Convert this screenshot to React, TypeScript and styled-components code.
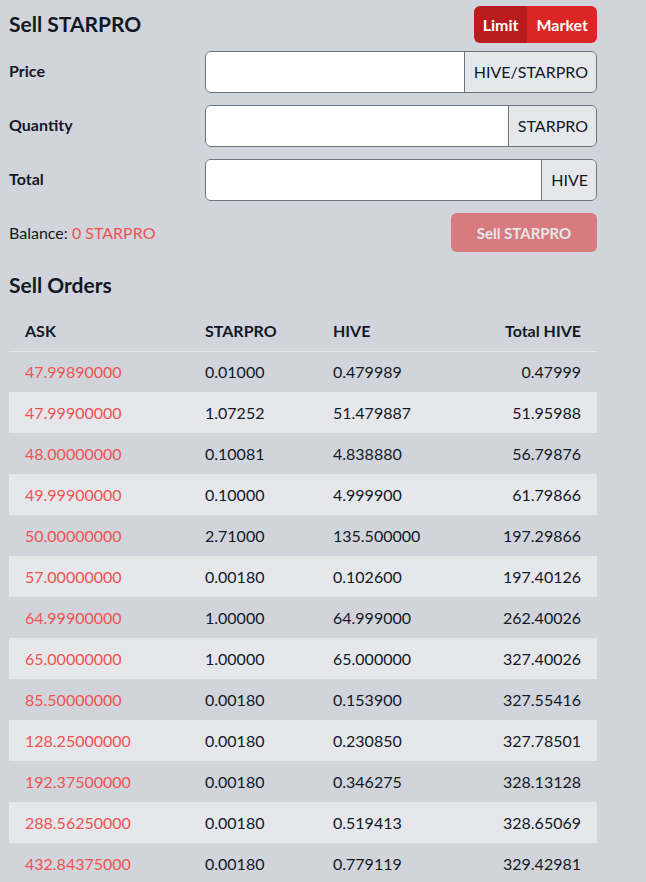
import React from "react";
import styled, { createGlobalStyle } from "styled-components";

const Global = createGlobalStyle`
  html, body { margin: 0; padding: 0; background: #d1d5db; }
  body { font-family: Lato, "Noto Sans", sans-serif; color: #111827; }
  * { box-sizing: border-box; }
`;

const Page = styled.div`
  width: 646px;
  padding: 6px 49px 0 9px;
`;

const Header = styled.div`
  display: flex;
  align-items: center;
  justify-content: space-between;
  height: 37px;
`;

const Title = styled.h2`
  margin: 0 0 2px;
  font-size: 21px;
  line-height: 26px;
  font-weight: 700;
  color: #111827;
`;

const Toggle = styled.div`
  display: flex;
  border-radius: 6px;
  overflow: hidden;
  height: 37px;
`;

const ToggleBtn = styled.button<{ $active?: boolean }>`
  border: none;
  font-family: inherit;
  font-size: 16px;
  font-weight: 700;
  color: #ffffff;
  padding: 0 9px 1px;
  background: ${(p) => (p.$active ? "#b91c1c" : "#dc2626")};
`;

const Form = styled.div`
  display: flex;
  flex-direction: column;
  gap: 12px;
  margin-top: 8px;
`;

const Row = styled.div`
  display: grid;
  grid-template-columns: 196px 1fr;
  align-items: center;
`;

const Label = styled.label`
  font-size: 16px;
  font-weight: 700;
  line-height: 20px;
  padding-bottom: 2px;
`;

const InputGroup = styled.div`
  display: flex;
  height: 42px;
  border: 1px solid #6b7280;
  border-radius: 6px;
  overflow: hidden;
`;

const Input = styled.input`
  flex: 1;
  min-width: 0;
  border: none;
  background: #ffffff;
  outline: none;
  font-family: inherit;
  font-size: 16px;
  padding: 0 12px;
`;

const Addon = styled.span`
  display: flex;
  align-items: center;
  padding: 0 8px 1px 9px;
  background: #e5e7eb;
  border-left: 1px solid #6b7280;
  font-size: 16px;
  color: #111827;
`;

const BalanceRow = styled.div`
  display: flex;
  align-items: center;
  justify-content: space-between;
`;

const Balance = styled.span`
  font-size: 16px;
`;

const Red = styled.span`
  color: #f05252;
`;

const SellBtn = styled.button`
  height: 39px;
  width: 146px;
  border: none;
  border-radius: 6px;
  background: #d77b7e;
  color: #e5e7eb;
  font-family: inherit;
  font-size: 15px;
  font-weight: 700;
`;

const SubTitle = styled.h3`
  margin: 21px 0 0;
  font-size: 21px;
  font-weight: 700;
  line-height: 24px;
`;

const Table = styled.table`
  width: 588px;
  margin-top: 14px;
  border-collapse: collapse;
  table-layout: fixed;
  font-size: 16px;
`;

const Th = styled.th<{ $right?: boolean }>`
  height: 40px;
  padding: 0 16px;
  text-align: ${(p) => (p.$right ? "right" : "left")};
  font-weight: 700;
  border-bottom: 1px solid #e5e7eb;
`;

const Tr = styled.tr<{ $striped?: boolean }>`
  background: ${(p) => (p.$striped ? "#e5e7eb" : "transparent")};
`;

const Td = styled.td<{ $right?: boolean; $red?: boolean }>`
  height: 41px;
  padding: 0 16px;
  text-align: ${(p) => (p.$right ? "right" : "left")};
  color: ${(p) => (p.$red ? "#f05252" : "#111827")};
`;

const orders = [
  ["47.99890000", "0.01000", "0.479989", "0.47999"],
  ["47.99900000", "1.07252", "51.479887", "51.95988"],
  ["48.00000000", "0.10081", "4.838880", "56.79876"],
  ["49.99900000", "0.10000", "4.999900", "61.79866"],
  ["50.00000000", "2.71000", "135.500000", "197.29866"],
  ["57.00000000", "0.00180", "0.102600", "197.40126"],
  ["64.99900000", "1.00000", "64.999000", "262.40026"],
  ["65.00000000", "1.00000", "65.000000", "327.40026"],
  ["85.50000000", "0.00180", "0.153900", "327.55416"],
  ["128.25000000", "0.00180", "0.230850", "327.78501"],
  ["192.37500000", "0.00180", "0.346275", "328.13128"],
  ["288.56250000", "0.00180", "0.519413", "328.65069"],
  ["432.84375000", "0.00180", "0.779119", "329.42981"],
];

export default function App() {
  return (
    <>
      <Global />
      <Page>
        <Header>
          <Title>Sell STARPRO</Title>
          <Toggle>
            <ToggleBtn $active>Limit</ToggleBtn>
            <ToggleBtn>Market</ToggleBtn>
          </Toggle>
        </Header>
        <Form>
          <Row>
            <Label>Price</Label>
            <InputGroup>
              <Input />
              <Addon>HIVE/STARPRO</Addon>
            </InputGroup>
          </Row>
          <Row>
            <Label>Quantity</Label>
            <InputGroup>
              <Input />
              <Addon>STARPRO</Addon>
            </InputGroup>
          </Row>
          <Row>
            <Label>Total</Label>
            <InputGroup>
              <Input />
              <Addon>HIVE</Addon>
            </InputGroup>
          </Row>
          <BalanceRow>
            <Balance>
              Balance: <Red>0 STARPRO</Red>
            </Balance>
            <SellBtn disabled>Sell STARPRO</SellBtn>
          </BalanceRow>
        </Form>
        <SubTitle>Sell Orders</SubTitle>
        <Table>
          <colgroup>
            <col style={{ width: 180 }} />
            <col style={{ width: 128 }} />
            <col style={{ width: 150 }} />
            <col />
          </colgroup>
          <thead>
            <tr>
              <Th>ASK</Th>
              <Th>STARPRO</Th>
              <Th>HIVE</Th>
              <Th $right>Total HIVE</Th>
            </tr>
          </thead>
          <tbody>
            {orders.map((o, i) => (
              <Tr key={i} $striped={i % 2 === 1}>
                <Td $red>{o[0]}</Td>
                <Td>{o[1]}</Td>
                <Td>{o[2]}</Td>
                <Td $right>{o[3]}</Td>
              </Tr>
            ))}
          </tbody>
        </Table>
      </Page>
    </>
  );
}
